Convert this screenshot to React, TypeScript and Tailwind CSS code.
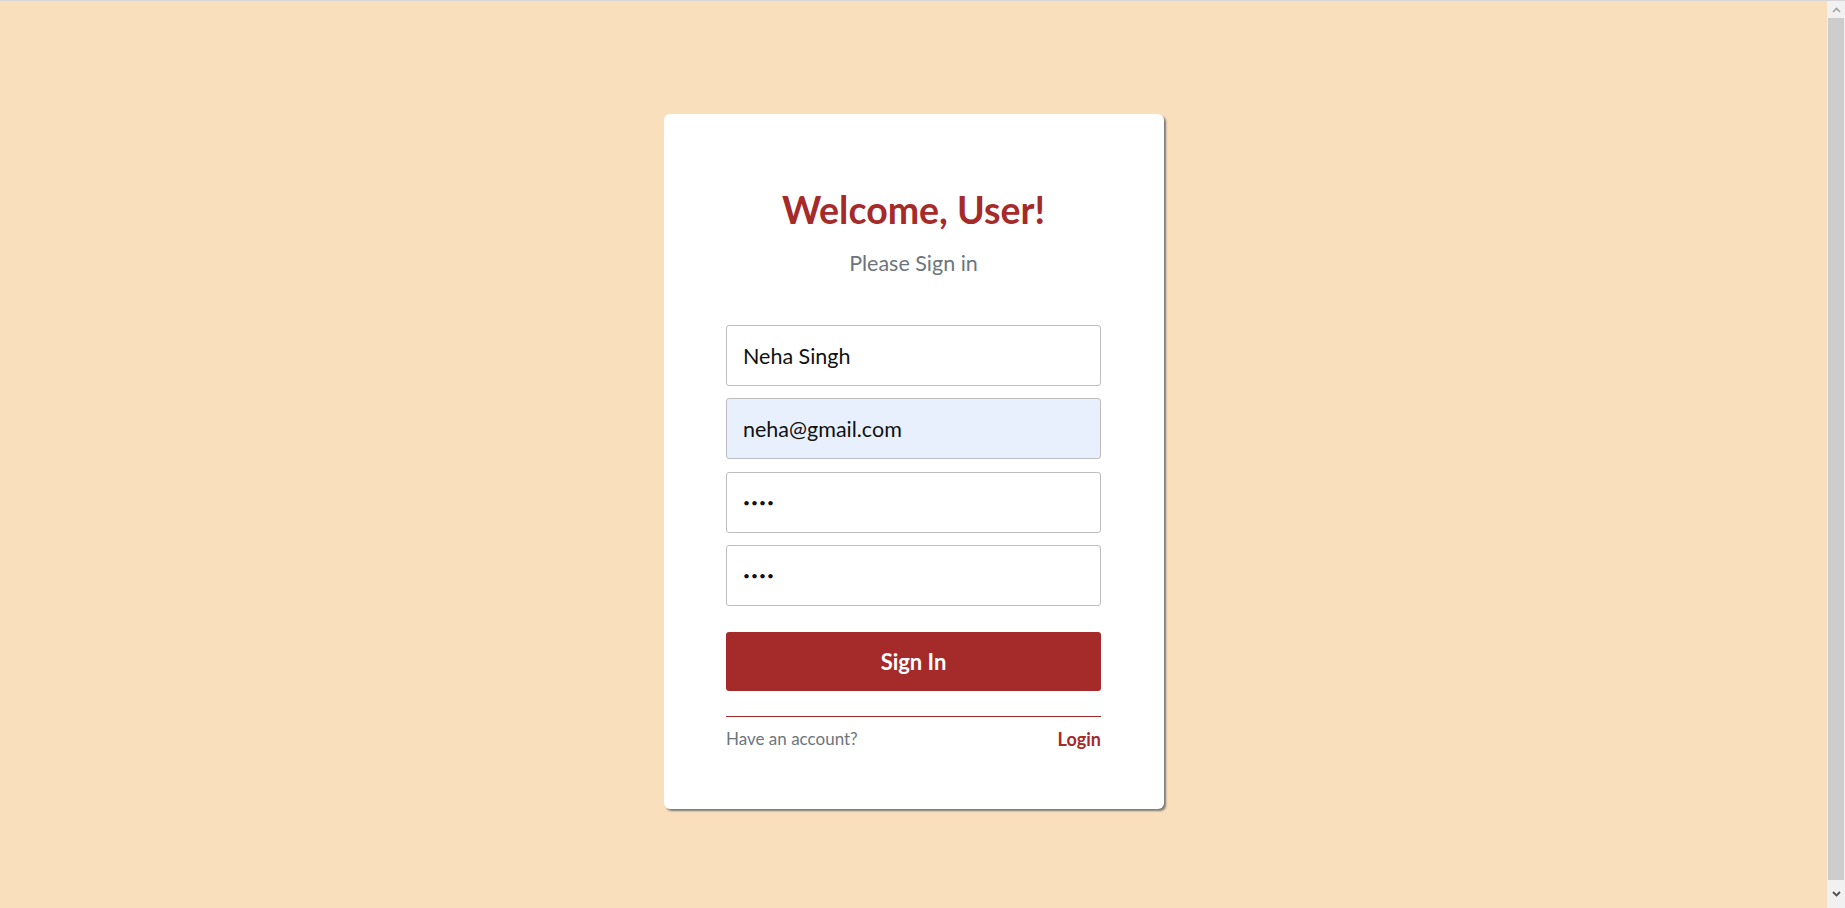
import { useState } from 'react'

const font = { fontFamily: 'Lato, "Noto Sans", sans-serif' }

function Field({ type, value, filled }: { type: string; value: string; filled?: boolean }) {
  const isPass = type === 'password'
  return (
    <input
      type={type}
      defaultValue={value}
      className={
        'h-[61px] w-full rounded-[3px] border border-[#bdbdbd] px-4 text-[#111] outline-none ' +
        (isPass ? 'text-[12px] tracking-[1px] ' : 'text-[21.5px] ') +
        (filled ? 'bg-[#e8f0fe]' : 'bg-white')
      }
      style={font}
    />
  )
}

export default function App() {
  const [name] = useState('Neha Singh')

  return (
    <div className="flex h-[908px] w-full overflow-hidden border-t border-[#d6d6d6] bg-[#f9dfbb]" style={font}>
      <main className="flex flex-1 justify-center pt-[113px]">
        <div className="flex h-[695px] w-[500px] flex-col items-center rounded-md bg-white pt-[73px] shadow-[2px_2px_2px_#7a7a7a]">
          <h1 className="text-[37.5px] font-bold leading-[46px] text-[#a52a2a]">Welcome, User!</h1>
          <p className="mt-4 text-[21.5px] leading-[28px] text-[#6c757d]">Please Sign in</p>

          <form className="mt-12 flex w-[375px] flex-col gap-[12.3px]">
            <Field type="text" value={name} />
            <Field type="email" value="neha@gmail.com" filled />
            <Field type="password" value="1234" />
            <Field type="password" value="1234" />
          </form>

          <button className="mt-[26px] h-[59px] w-[375px] rounded-[3px] bg-[#a52a2a] text-[22px] font-bold text-white">
            Sign In
          </button>

          <div className="mt-[25px] w-[375px] border-t border-[#a52a2a]" />
          <div className="mt-[10px] flex w-[375px] items-center justify-between leading-6">
            <span className="text-[17px] text-[#6c757d]">Have an account?</span>
            <a className="text-[18px] font-bold text-[#a52a2a]">Login</a>
          </div>
        </div>
      </main>

      <div className="flex w-[18px] flex-col bg-[#f1f1f1]">
        <div className="flex h-[17px] items-center justify-center">
          <svg width="9" height="6" viewBox="0 0 9 6">
            <path d="M1 5 L4.5 1.5 L8 5" fill="none" stroke="#a3a3a3" strokeWidth="1.6" />
          </svg>
        </div>
        <div className="mx-[1px] flex-1 bg-[#cdcdcd]" />
        <div className="flex h-[28px] items-center justify-center">
          <svg width="9" height="6" viewBox="0 0 9 6">
            <path d="M1 1 L4.5 4.5 L8 1" fill="none" stroke="#505050" strokeWidth="1.8" />
          </svg>
        </div>
      </div>
    </div>
  )
}
